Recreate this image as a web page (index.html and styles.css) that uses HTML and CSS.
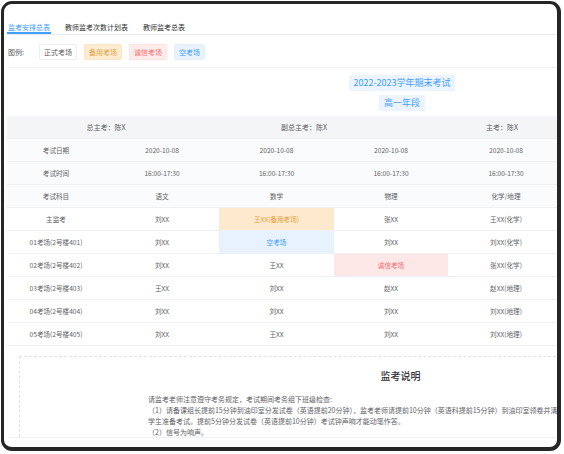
FILE: index.html
```html
<!DOCTYPE html>
<html lang="zh">
<head>
<meta charset="utf-8">
<title>监考安排总表</title>
<link rel="stylesheet" href="styles.css">
</head>
<body>
<div class="frame">
  <div class="page">
    <div class="tabs">
      <div class="tab active">监考安排总表</div>
      <div class="tab">教师监考次数计划表</div>
      <div class="tab">教师监考总表</div>
    </div>
    <div class="legend">
      <span class="legend-label">图例:</span>
      <span class="tag tag-normal">正式考场</span>
      <span class="tag tag-backup">备用考场</span>
      <span class="tag tag-honest">诚信考场</span>
      <span class="tag tag-empty">空考场</span>
    </div>
    <div class="titles">
      <div class="title-box">2022-2023学年期末考试</div>
      <div class="title-box">高一年段</div>
    </div>
    <div class="table">
      <div class="row row-top">
        <div class="cell">总主考：陈X</div>
        <div class="cell">副总主考：陈X</div>
        <div class="cell">主考：陈X</div>
      </div>
      <div class="row row-head">
        <div class="cell">考试日期</div>
        <div class="cell">2020-10-08</div>
        <div class="cell">2020-10-08</div>
        <div class="cell">2020-10-08</div>
        <div class="cell">2020-10-08</div>
      </div>
      <div class="row row-head">
        <div class="cell">考试时间</div>
        <div class="cell">16:00-17:30</div>
        <div class="cell">16:00-17:30</div>
        <div class="cell">16:00-17:30</div>
        <div class="cell">16:00-17:30</div>
      </div>
      <div class="row row-head">
        <div class="cell">考试科目</div>
        <div class="cell">语文</div>
        <div class="cell">数学</div>
        <div class="cell">物理</div>
        <div class="cell">化学/地理</div>
      </div>
      <div class="row">
        <div class="cell">主监考</div>
        <div class="cell">刘XX</div>
        <div class="cell cell-backup">王XX(备用考场)</div>
        <div class="cell">张XX</div>
        <div class="cell">王XX(化学)</div>
      </div>
      <div class="row">
        <div class="cell">01考场(2号楼401)</div>
        <div class="cell">刘XX</div>
        <div class="cell cell-empty">空考场</div>
        <div class="cell">刘XX</div>
        <div class="cell">刘XX(化学)</div>
      </div>
      <div class="row">
        <div class="cell">02考场(2号楼402)</div>
        <div class="cell">刘XX</div>
        <div class="cell">王XX</div>
        <div class="cell cell-honest">诚信考场</div>
        <div class="cell">张XX(化学)</div>
      </div>
      <div class="row">
        <div class="cell">03考场(2号楼403)</div>
        <div class="cell">王XX</div>
        <div class="cell">刘XX</div>
        <div class="cell">赵XX</div>
        <div class="cell">赵XX(地理)</div>
      </div>
      <div class="row">
        <div class="cell">04考场(2号楼404)</div>
        <div class="cell">刘XX</div>
        <div class="cell">刘XX</div>
        <div class="cell">刘XX</div>
        <div class="cell">刘XX(地理)</div>
      </div>
      <div class="row">
        <div class="cell">05考场(2号楼405)</div>
        <div class="cell">刘XX</div>
        <div class="cell">王XX</div>
        <div class="cell">刘XX</div>
        <div class="cell">刘XX(地理)</div>
      </div>
    </div>
    <div class="notice-wrap">
      <div class="notice">
        <div class="notice-title">监考说明</div>
        <div class="notice-text">
          <div class="notice-line">请监考老师注意遵守考务规定，考试期间考务组下班级检查:</div>
          <div class="notice-line">（1）请备课组长提前15分钟到油印室分发试卷（英语提前20分钟），监考老师请提前10分钟（英语科提前15分钟）到油印室领卷并清点试卷</div>
          <div class="notice-line">学生准备考试。提前5分钟分发试卷（英语提前10分钟）考试钟声响才能动笔作答。</div>
          <div class="notice-line">（2）信号为响声。</div>
        </div>
      </div>
    </div>
  </div>
</div>
</body>
</html>
```

FILE: styles.css
```css
* {
  box-sizing: border-box;
}

html, body {
  margin: 0;
  padding: 0;
  background: #ffffff;
}

body {
  font-family: "Noto Sans CJK SC", "Noto Sans", sans-serif;
  color: #606266;
}

.frame {
  margin: 1px 0 0 1px;
  width: 560px;
  height: 450px;
  border: 3px solid #262626;
  border-right-width: 4px;
  border-bottom-width: 4px;
  border-radius: 11px;
  overflow: hidden;
  background: #ffffff;
}

.page {
  width: 793px;
  padding-left: 3px;
}

/* Tabs */
.tabs {
  display: flex;
  height: 31px;
  border-bottom: 1px solid #e8eaee;
}

.tab {
  font-size: 7px;
  line-height: 10px;
  padding: 18px 1px 0;
  margin-right: 13px;
  border-bottom: 2px solid transparent;
  color: #303133;
}

.tab.active {
  color: #409eff;
  border-bottom-color: #409eff;
}

/* Legend */
.legend {
  display: flex;
  align-items: center;
  gap: 7px;
  height: 33px;
  padding: 1px 0 0 1px;
  border-bottom: 1px solid #eef0f3;
  font-size: 7px;
}

.legend-label {
  color: #606266;
  margin-right: 8px;
}

.tag {
  height: 16px;
  line-height: 15px;
  padding: 0 4px;
  border: 1px solid transparent;
  border-radius: 2px;
}

.tag-normal {
  background: #ffffff;
  border-color: #eceef2;
  color: #606266;
}

.tag-backup {
  background: #fdebd2;
  border-color: #fde4c4;
  color: #e6a23c;
}

.tag-honest {
  background: #fdecec;
  border-color: #fde2e2;
  color: #f56c6c;
}

.tag-empty {
  background: #e9f3fe;
  border-color: #e2eefd;
  color: #409eff;
}

/* Titles */
.titles {
  display: flex;
  flex-direction: column;
  align-items: center;
  gap: 4px;
  padding: 7px 0 5px;
}

.title-box {
  font-size: 9px;
  line-height: 16px;
  padding: 0 4.5px;
  background: #ecf5ff;
  color: #409eff;
}

/* Table */
.table {
  width: 594px;
  font-size: 6.6px;
}

.row {
  display: grid;
  grid-template-columns: 98px 114px 115px 114px 116px 37px;
  height: 23px;
  border-bottom: 1px solid #eef0f3;
  background: #ffffff;
}

.row-top {
  grid-template-columns: repeat(3, 198px);
  background: #f4f5f7;
  font-size: 7px;
}

.row-head {
  background: #fafbfc;
}

.cell {
  display: flex;
  align-items: center;
  justify-content: center;
  white-space: nowrap;
  color: #606266;
}

.cell-backup {
  background: #fde9cd;
  color: #e6a23c;
}

.cell-empty {
  background: #e7f2fe;
  color: #409eff;
}

.cell-honest {
  background: #fde7e7;
  color: #f56c6c;
}

/* Notice */
.notice-wrap {
  margin-top: 10px;
  width: 550px;
  overflow: hidden;
  border-bottom: 1px solid #eef0f3;
}

.notice {
  margin-left: 12px;
  width: 762px;
  height: 81px;
  border-top: 1px dashed #dfe2e8;
  border-left: 1px dashed #dfe2e8;
  padding-top: 12px;
}

.notice-title {
  font-size: 10px;
  line-height: 14px;
  text-align: center;
  color: #303133;
  font-weight: 500;
}

.notice-text {
  margin: 11px 0 0 128px;
  font-size: 7px;
  line-height: 11px;
  color: #606266;
}

.notice-line {
  white-space: nowrap;
}
```
